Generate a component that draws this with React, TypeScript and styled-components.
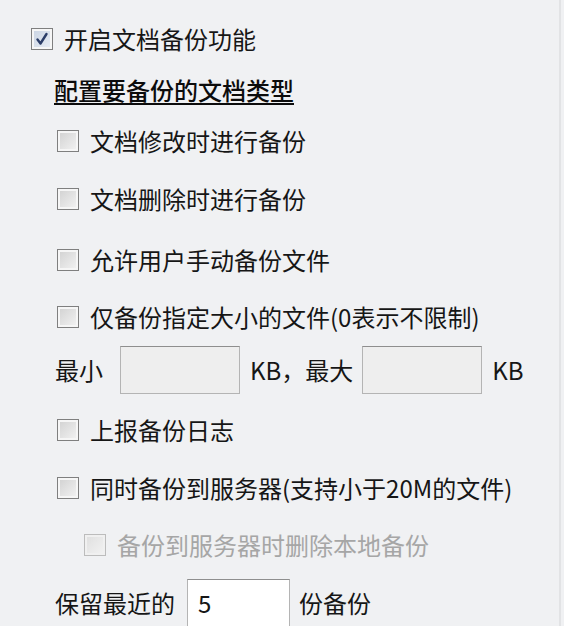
import React from "react";
import styled, { createGlobalStyle } from "styled-components";

const Global = createGlobalStyle`
  html, body { margin: 0; padding: 0; background: #f0f1f3; }
  body { font-family: "Noto Sans CJK SC", "Noto Sans", sans-serif; }
`;

const Panel = styled.div`
  width: 561px;
  height: 626px;
  box-sizing: border-box;
  border-right: 2px solid #e2e3e5;
  background: #f0f1f3;
  padding-top: 14px;
  display: flex;
  flex-direction: column;
  color: #161616;
  font-size: 24px;
  line-height: 1;
`;

const Row = styled.div<{ $h: number; $indent: number }>`
  height: ${(p) => p.$h}px;
  padding-left: ${(p) => p.$indent}px;
  display: flex;
  align-items: center;
  flex-shrink: 0;
`;

const Box = styled.span<{ $checked?: boolean; $disabled?: boolean }>`
  width: 22px;
  height: 22px;
  box-sizing: border-box;
  border: 1px solid ${(p) => (p.$disabled ? "#bcbcbc" : "#7f7f7f")};
  background: ${(p) =>
    p.$checked
      ? "linear-gradient(135deg, #c9d3e2 0%, #e8edf5 100%)"
      : p.$disabled
      ? "linear-gradient(135deg, #dedede 0%, #f3f3f3 100%)"
      : "linear-gradient(135deg, #d0d0d0 0%, #f4f4f4 100%)"};
  box-shadow: inset 0 0 0 2px ${(p) => (p.$disabled ? "#f0f0f0" : "#f6f6f6")};
  display: flex;
  align-items: center;
  justify-content: center;
  margin-right: 11px;
  flex-shrink: 0;
`;

const Label = styled.span<{ $disabled?: boolean; $gap?: number }>`
  color: ${(p) => (p.$disabled ? "#a6a6a6" : "#161616")};
  white-space: nowrap;
  margin-right: ${(p) => p.$gap ?? 0}px;
`;

const Heading = styled.span`
  font-weight: 500;
  color: #0c0c0c;
  text-decoration: underline;
  text-underline-offset: 3px;
  text-decoration-thickness: 2px;
  white-space: nowrap;
`;

const Field = styled.span<{ $w: number; $white?: boolean }>`
  width: ${(p) => p.$w}px;
  height: 48px;
  box-sizing: border-box;
  border: 1px solid #b4b4b4;
  border-top-color: #8e8e8e;
  background: ${(p) => (p.$white ? "#ffffff" : "#eeeeee")};
  display: flex;
  align-items: center;
  padding-left: 10px;
  margin-right: ${(p) => (p.$white ? 9 : 10)}px;
  flex-shrink: 0;
`;

const Check = () => (
  <svg width="16" height="16" viewBox="0 0 16 16">
    <path d="M3.5 8.5 L6.5 12.5 L12.5 3" fill="none" stroke="#2b3d68" strokeWidth="2.4" strokeLinecap="round" strokeLinejoin="round" />
  </svg>
);

type CB = { text: string; h: number; indent: number; checked?: boolean; disabled?: boolean };

const CheckRow = ({ text, h, indent, checked, disabled }: CB) => (
  <Row $h={h} $indent={indent}>
    <Box $checked={checked} $disabled={disabled}>{checked && <Check />}</Box>
    <Label $disabled={disabled}>{text}</Label>
  </Row>
);

export default function App() {
  return (
    <>
      <Global />
      <Panel>
        <CheckRow text="开启文档备份功能" h={50} indent={31} checked />
        <Row $h={52} $indent={54}>
          <Heading>配置要备份的文档类型</Heading>
        </Row>
        <CheckRow text="文档修改时进行备份" h={50} indent={57} />
        <CheckRow text="文档删除时进行备份" h={66} indent={57} />
        <CheckRow text="允许用户手动备份文件" h={56} indent={57} />
        <CheckRow text="仅备份指定大小的文件(0表示不限制)" h={57} indent={57} />
        <Row $h={50} $indent={55}>
          <Label $gap={17}>最小</Label>
          <Field $w={120} />
          <Label $gap={9}>KB，最大</Label>
          <Field $w={120} />
          <Label>KB</Label>
        </Row>
        <CheckRow text="上报备份日志" h={70} indent={57} />
        <CheckRow text="同时备份到服务器(支持小于20M的文件)" h={46} indent={57} />
        <CheckRow text="备份到服务器时删除本地备份" h={68} indent={84} disabled />
        <Row $h={48} $indent={55}>
          <Label $gap={12}>保留最近的</Label>
          <Field $w={103} $white>5</Field>
          <Label>份备份</Label>
        </Row>
      </Panel>
    </>
  );
}
